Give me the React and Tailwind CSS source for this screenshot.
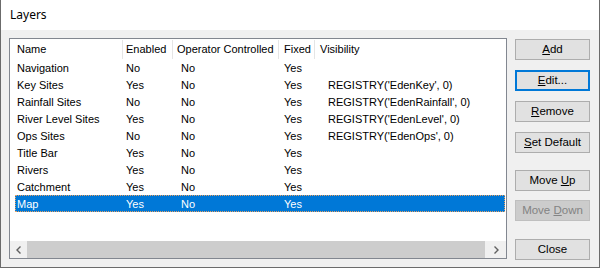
import React from "react";

const rows = [
  ["Navigation", "No", "No", "Yes", ""],
  ["Key Sites", "Yes", "No", "Yes", "REGISTRY('EdenKey', 0)"],
  ["Rainfall Sites", "No", "No", "Yes", "REGISTRY('EdenRainfall', 0)"],
  ["River Level Sites", "Yes", "No", "Yes", "REGISTRY('EdenLevel', 0)"],
  ["Ops Sites", "No", "No", "Yes", "REGISTRY('EdenOps', 0)"],
  ["Title Bar", "Yes", "No", "Yes", ""],
  ["Rivers", "Yes", "No", "Yes", ""],
  ["Catchment", "Yes", "No", "Yes", ""],
  ["Map", "Yes", "No", "Yes", ""],
];

function Btn({ children, focused, disabled }) {
  return (
    <div
      className={
        "w-[75px] h-[21px] flex items-center justify-center border text-[11.5px] leading-none " +
        (disabled
          ? "bg-[#cccccc] border-[#bfbfbf] text-[#838383]"
          : focused
          ? "bg-[#e1e1e1] border-[#0078d7] text-black outline outline-1 outline-[#0078d7] outline-offset-[-2px]"
          : "bg-[#e1e1e1] border-[#adadad] text-black")
      }
    >
      <span className="whitespace-pre">{children}</span>
    </div>
  );
}

export default function App() {
  return (
    <div
      className="w-[600px] h-[268px] flex flex-col border border-t-0 border-[#6b6b6b] bg-[#f0f0f0] overflow-hidden"
      style={{ fontFamily: "'Liberation Sans', Arial, sans-serif" }}
    >
      <div className="h-[30px] bg-white flex items-center pl-[9px] text-[12px] text-black" style={{ fontFamily: "'Noto Sans', sans-serif" }}>
        Layers
      </div>
      <div className="flex pl-[8px] pt-[8px]">
        <div className="w-[498px] h-[221px] border border-[#828790] bg-white flex flex-col text-[11px] text-black">
          <div className="h-[20px] flex items-center whitespace-nowrap pt-[1px]">
            <div className="w-[112px] pl-[7px]">Name</div>
            <div className="w-px h-[19px] bg-[#e5e5e5]" />
            <div className="w-[49px] pl-[3px]">Enabled</div>
            <div className="w-px h-[19px] bg-[#e5e5e5]" />
            <div className="w-[105px] pl-[4px]">Operator Controlled</div>
            <div className="w-px h-[19px] bg-[#e5e5e5]" />
            <div className="w-[35px] pl-[5px]">Fixed</div>
            <div className="w-px h-[19px] bg-[#e5e5e5]" />
            <div className="pl-[5px]">Visibility</div>
          </div>
          {rows.map((r, i) => {
            const sel = i === rows.length - 1;
            return (
              <div key={i} className="h-[17px] flex items-center pl-[5px] pr-[1px]">
                <div
                  className={
                    "h-[17px] flex-1 flex items-center pt-[1px] whitespace-nowrap " +
                    (sel ? "bg-[#0078d7] text-white border border-dotted border-[#e8a060]" : "border border-transparent")
                  }
                >
                  <div className="w-[110px] pl-[1px]">{r[0]}</div>
                  <div className="w-[55px]">{r[1]}</div>
                  <div className="w-[103px]">{r[2]}</div>
                  <div className="w-[44px]">{r[3]}</div>
                  <div>{r[4]}</div>
                </div>
              </div>
            );
          })}
          <div className="flex-1" />
          <div className="h-[17px] flex bg-[#f0f0f0]">
            <div className="w-[17px] flex items-center justify-center">
              <svg width="8" height="8" viewBox="0 0 8 8">
                <path d="M5.5 0.5 L2 4 L5.5 7.5" fill="none" stroke="#606060" strokeWidth="1.4" />
              </svg>
            </div>
            <div className="w-[458px] bg-[#cdcdcd]" />
            <div className="flex-1 flex items-center justify-center">
              <svg width="8" height="8" viewBox="0 0 8 8">
                <path d="M2.5 0.5 L6 4 L2.5 7.5" fill="none" stroke="#606060" strokeWidth="1.4" />
              </svg>
            </div>
          </div>
        </div>
        <div className="ml-[8px] pt-[1px] flex flex-col">
          <Btn><span className="underline">A</span>dd</Btn>
          <div className="h-[10px]" />
          <Btn focused><span className="underline">E</span>dit...</Btn>
          <div className="h-[10px]" />
          <Btn><span className="underline">R</span>emove</Btn>
          <div className="h-[10px]" />
          <Btn><span className="underline">S</span>et Default</Btn>
          <div className="h-[17px]" />
          <Btn>{"Move "}<span className="underline">U</span>p</Btn>
          <div className="h-[9px]" />
          <Btn disabled>{"Move "}<span className="underline">D</span>own</Btn>
          <div className="h-[18px]" />
          <Btn>Close</Btn>
        </div>
      </div>
    </div>
  );
}
